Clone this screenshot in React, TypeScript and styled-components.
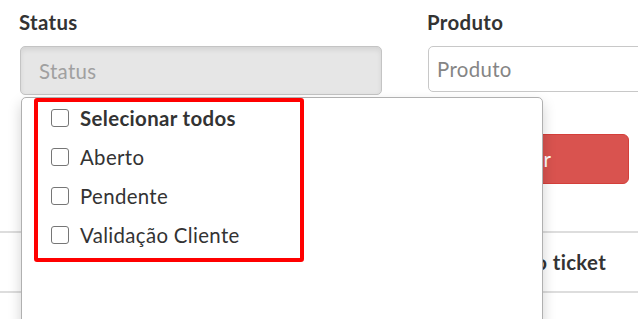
import React from 'react';
import styled, { createGlobalStyle } from 'styled-components';

const GlobalStyle = createGlobalStyle`
  html, body {
    margin: 0;
    padding: 0;
    overflow: hidden;
    background: #fff;
  }
  body {
    font-family: Lato, 'Open Sans', 'Liberation Sans', sans-serif;
    font-size: 20.4px;
    letter-spacing: 0.35px;
    color: #333;
  }
  * {
    box-sizing: border-box;
  }
`;

const Page = styled.div`
  width: 638px;
  height: 319px;
  padding-top: 8px;
  overflow: hidden;
`;

const FilterRow = styled.div`
  display: grid;
  grid-template-columns: 362px 362px;
  column-gap: 46px;
  padding-left: 20px;
  align-items: start;
`;

const Field = styled.div`
  position: relative;
`;

const Label = styled.label`
  display: block;
  font-weight: 700;
  line-height: 28px;
  margin-bottom: 10px;
  margin-left: -1px;
`;

const SelectButton = styled.button`
  display: flex;
  align-items: center;
  width: 100%;
  height: 49px;
  padding: 0 18px;
  font: inherit;
  letter-spacing: inherit;
  color: #a0a0a0;
  background: #e6e6e6;
  border: 1px solid #c4c4c4;
  border-radius: 5px;
  box-shadow: inset 0 3px 5px rgba(0, 0, 0, 0.08);
  text-align: left;
`;

const TextInput = styled.input`
  display: block;
  width: 100%;
  height: 46px;
  padding: 0 8px;
  font: inherit;
  letter-spacing: inherit;
  color: #555;
  background: #fff;
  border: 1px solid #c8c8c8;
  border-radius: 5px;
  outline: none;

  &::placeholder {
    color: #858585;
  }
`;

const DropdownMenu = styled.div`
  position: absolute;
  top: calc(100% + 2px);
  left: 1px;
  width: 522px;
  height: 260px;
  background: #fff;
  border: 1px solid #b0b0b0;
  border-radius: 5px 5px 0 0;
  box-shadow: 0 6px 14px rgba(0, 0, 0, 0.18);
  z-index: 10;
`;

const Highlight = styled.ul`
  list-style: none;
  margin: 0 0 0 12px;
  padding: 0 0 6px 13px;
  width: 270px;
  display: flex;
  flex-direction: column;
  gap: 6px;
  border: 4px solid #ff0000;
  border-radius: 3px;
`;

const Option = styled.li<{ $bold?: boolean }>`
  display: flex;
  align-items: center;
  gap: 11px;
  height: 33px;
  padding-bottom: 2px;
  font-weight: ${(p) => (p.$bold ? 700 : 400)};
  color: #333;
  white-space: nowrap;
`;

const Check = styled.input`
  appearance: none;
  flex: none;
  width: 18px;
  height: 18px;
  margin: 0;
  background: #fff;
  border: 1.5px solid #767676;
  border-radius: 3px;
`;

const ButtonRow = styled.div`
  display: grid;
  grid-template-columns: 362px 211px;
  column-gap: 36px;
  padding-left: 20px;
  margin-top: 39px;
`;

const DangerButton = styled.button`
  grid-column: 2;
  height: 50px;
  font: inherit;
  letter-spacing: inherit;
  color: #fff;
  background: #d9534f;
  border: 1px solid #d43f3a;
  border-radius: 6px;
`;

const Table = styled.div`
  margin-top: 47px;
`;

const HeaderRow = styled.div`
  display: grid;
  grid-template-columns: 140px 140px 122px auto;
  padding-left: 40px;
  height: 62px;
  align-items: center;
  border-top: 2px solid #dddddd;
  border-bottom: 2px solid #dddddd;
`;

const HeaderCell = styled.div`
  font-weight: 700;
  white-space: nowrap;
`;

const BodyRow = styled.div`
  height: 40px;
`;

const options = [
  { label: 'Selecionar todos', bold: true },
  { label: 'Aberto' },
  { label: 'Pendente' },
  { label: 'Validação Cliente' },
];

export default function App() {
  return (
    <Page>
      <GlobalStyle />
      <FilterRow>
        <Field>
          <Label>Status</Label>
          <SelectButton type="button">Status</SelectButton>
          <DropdownMenu>
            <Highlight>
              {options.map((o) => (
                <Option key={o.label} $bold={o.bold}>
                  <Check type="checkbox" />
                  {o.label}
                </Option>
              ))}
            </Highlight>
          </DropdownMenu>
        </Field>
        <Field>
          <Label>Produto</Label>
          <TextInput placeholder="Produto" />
        </Field>
      </FilterRow>
      <ButtonRow>
        <DangerButton type="button">Filtrar</DangerButton>
      </ButtonRow>
      <Table>
        <HeaderRow>
          <HeaderCell>Título</HeaderCell>
          <HeaderCell>Cliente</HeaderCell>
          <HeaderCell>Status</HeaderCell>
          <HeaderCell>Número do ticket</HeaderCell>
        </HeaderRow>
        <BodyRow />
      </Table>
    </Page>
  );
}
